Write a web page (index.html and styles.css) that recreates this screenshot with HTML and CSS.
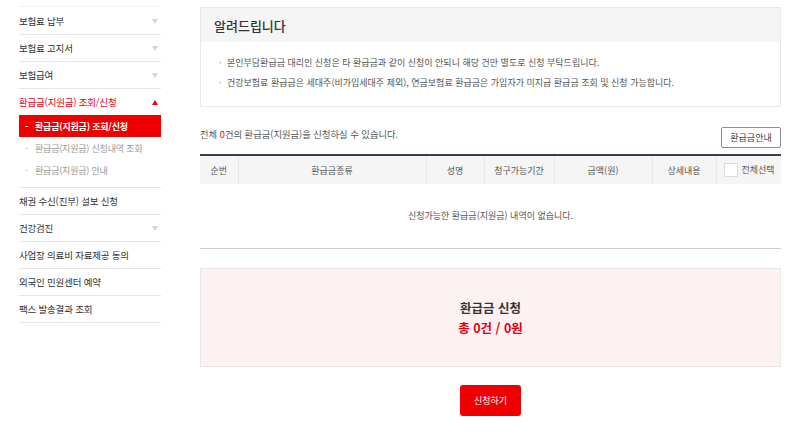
FILE: index.html
```html
<!DOCTYPE html>
<html lang="ko">
<head>
<meta charset="utf-8">
<link rel="stylesheet" href="styles.css">
</head>
<body>
<div class="page">
  <nav class="side">
    <ul class="menu">
      <li class="item"><span>보험료 납부</span><i class="arr"></i></li>
      <li class="item"><span>보험료 고지서</span><i class="arr"></i></li>
      <li class="item"><span>보험급여</span><i class="arr"></i></li>
      <li class="group">
        <div class="item head"><span>환급금(지원금) 조회/신청</span><i class="arr up"></i></div>
        <ul class="sub">
          <li class="on"><b>-</b>환급금(지원금) 조회/신청</li>
          <li><b>-</b>환급금(지원금) 신청내역 조회</li>
          <li><b>-</b>환급금(지원금) 안내</li>
        </ul>
      </li>
      <li class="item"><span>채권 수신(진부) 설보 신청</span></li>
      <li class="item"><span>건강검진</span><i class="arr"></i></li>
      <li class="item"><span>사업장 의료비 자료제공 동의</span></li>
      <li class="item"><span>외국인 민원센터 예약</span></li>
      <li class="item"><span>팩스 발송결과 조회</span></li>
    </ul>
  </nav>
  <main class="main">
    <section class="notice">
      <h2 class="notice-title">알려드립니다</h2>
      <ul class="notice-list">
        <li>본인부담환급금 대리인 신청은 타 환급금과 같이 신청이 안되니 해당 건만 별도로 신청 부탁드립니다.</li>
        <li>건강보험료 환급금은 세대주(비가입세대주 제외), 연금보험료 환급금은 가입자가 미지급 환급금 조회 및 신청 가능합니다.</li>
      </ul>
    </section>
    <div class="bar">
      <p class="count">전체 <em>0</em>건의 환급금(지원금)을 신청하실 수 있습니다.</p>
      <button class="guide">환급금안내</button>
    </div>
    <table class="grid">
      <colgroup>
        <col class="c1"><col class="c2"><col class="c3"><col class="c4"><col class="c5"><col class="c6"><col class="c7">
      </colgroup>
      <thead>
        <tr>
          <th>순번</th><th>환급금종류</th><th>성명</th><th>청구가능기간</th><th>금액(원)</th><th>상세내용</th>
          <th class="all"><span class="chk"></span>전체선택</th>
        </tr>
      </thead>
      <tbody>
        <tr><td colspan="7" class="empty">신청가능한 환급금(지원금) 내역이 없습니다.</td></tr>
      </tbody>
    </table>
    <section class="sum">
      <p class="sum-title">환급금 신청</p>
      <p class="sum-total">총 0건 / 0원</p>
    </section>
    <div class="actions"><button class="apply">신청하기</button></div>
  </main>
</div>
</body>
</html>
```
FILE: styles.css
```css
* { box-sizing: border-box; }
html, body { margin: 0; padding: 0; background: #fff; }
body {
  font-family: "Noto Sans CJK KR", "Noto Sans", sans-serif;
  color: #333;
}
.page {
  display: flex;
  padding-left: 19px;
  gap: 39px;
}
.side { width: 142px; flex: none; padding-top: 6px; }
.menu, .sub, .notice-list { list-style: none; margin: 0; padding: 0; }
.menu { border-top: 1px solid #f2f2f2; padding-top: 1px; }
.item {
  height: 27px;
  display: flex;
  align-items: center;
  justify-content: space-between;
  border-bottom: 1px solid #e6e6e6;
  font-size: 9.5px;
  color: #333;
  letter-spacing: -0.2px;
}
.group { border-bottom: 1px solid #e6e6e6; padding-bottom: 6px; }
.group .item { border-bottom: none; height: 26px; }
.item.head { color: #e60012; }
.arr {
  width: 0; height: 0;
  margin-right: 3px;
  border-left: 3.5px solid transparent;
  border-right: 3.5px solid transparent;
  border-top: 5px solid #d6d6d6;
}
.arr.up { border-top: none; border-bottom: 5px solid #e60012; }
.sub li {
  height: 22px;
  display: flex;
  align-items: center;
  font-size: 9px;
  color: #999;
  padding-left: 6px;
  letter-spacing: -0.2px;
}
.sub li b { font-weight: normal; width: 10px; color: #bbb; }
.sub li.on { background: #ee0000; color: #fff; font-weight: bold; }
.sub li.on b { color: #fff; font-weight: bold; }

.main { width: 581px; flex: none; }
.notice {
  margin-top: 7px;
  border: 1px solid #e8e8e8;
}
.notice-title {
  margin: 0;
  height: 34px;
  background: #f5f5f5;
  font-size: 13px;
  font-weight: 500;
  padding-left: 13px;
  display: flex;
  align-items: center;
  color: #333;
}
.notice-list { padding: 11px 0 13px 18px; }
.notice-list li {
  height: 20px;
  line-height: 20px;
  font-size: 9px;
  color: #555;
  position: relative;
  padding-left: 8px;
  white-space: nowrap;
}
.notice-list li::before {
  content: "·";
  position: absolute;
  left: 0;
  color: #888;
}
.bar {
  margin-top: 20px;
  display: flex;
  justify-content: space-between;
  align-items: flex-start;
}
.count { margin: 0; font-size: 9.3px; line-height: 14px; color: #555; }
.count em { font-style: normal; color: #e60012; }
.guide {
  width: 60px;
  height: 21px;
  border: 1px solid #8c8c98;
  border-radius: 2px;
  background: #fff;
  font-family: inherit;
  font-size: 9px;
  color: #444;
  padding: 0;
}
.grid {
  margin-top: 6px;
  width: 581px;
  border-collapse: collapse;
  table-layout: fixed;
  border-top: 2px solid #3d3d52;
}
.c1 { width: 38px; } .c2 { width: 188px; } .c3 { width: 58px; } .c4 { width: 70px; }
.c5 { width: 98px; } .c6 { width: 64px; } .c7 { width: 65px; }
.grid th {
  height: 29px;
  background: #f5f5f5;
  font-size: 9px;
  font-weight: normal;
  color: #555;
  border-left: 1px solid #e8e8e8;
  padding: 0;
}
.grid th:first-child { border-left: none; }
.grid th.all { text-align: left; padding-left: 7px; }
.chk {
  display: inline-block;
  width: 14px; height: 14px;
  border: 1px solid #dcdcdc;
  background: #fff;
  vertical-align: middle;
  margin-right: 4px;
}
.empty {
  height: 64px;
  text-align: center;
  font-size: 9px;
  color: #555;
  border-bottom: 1px solid #cdcdd3;
}
.sum {
  margin-top: 19px;
  height: 99px;
  background: #fdf1f2;
  border: 1px solid #e8e6e8;
  display: flex;
  flex-direction: column;
  align-items: center;
  justify-content: center;
  padding-top: 2px;
}
.sum p { margin: 0; font-size: 12.5px; font-weight: bold; line-height: 20px; }
.sum-title { color: #333; }
.sum-total { color: #e60012; }
.actions { display: flex; justify-content: center; margin-top: 18px; }
.apply {
  width: 61px;
  height: 31px;
  background: #ee0000;
  border: none;
  border-radius: 3px;
  color: #fff;
  font-family: inherit;
  font-size: 9px;
  padding: 0;
}
```
